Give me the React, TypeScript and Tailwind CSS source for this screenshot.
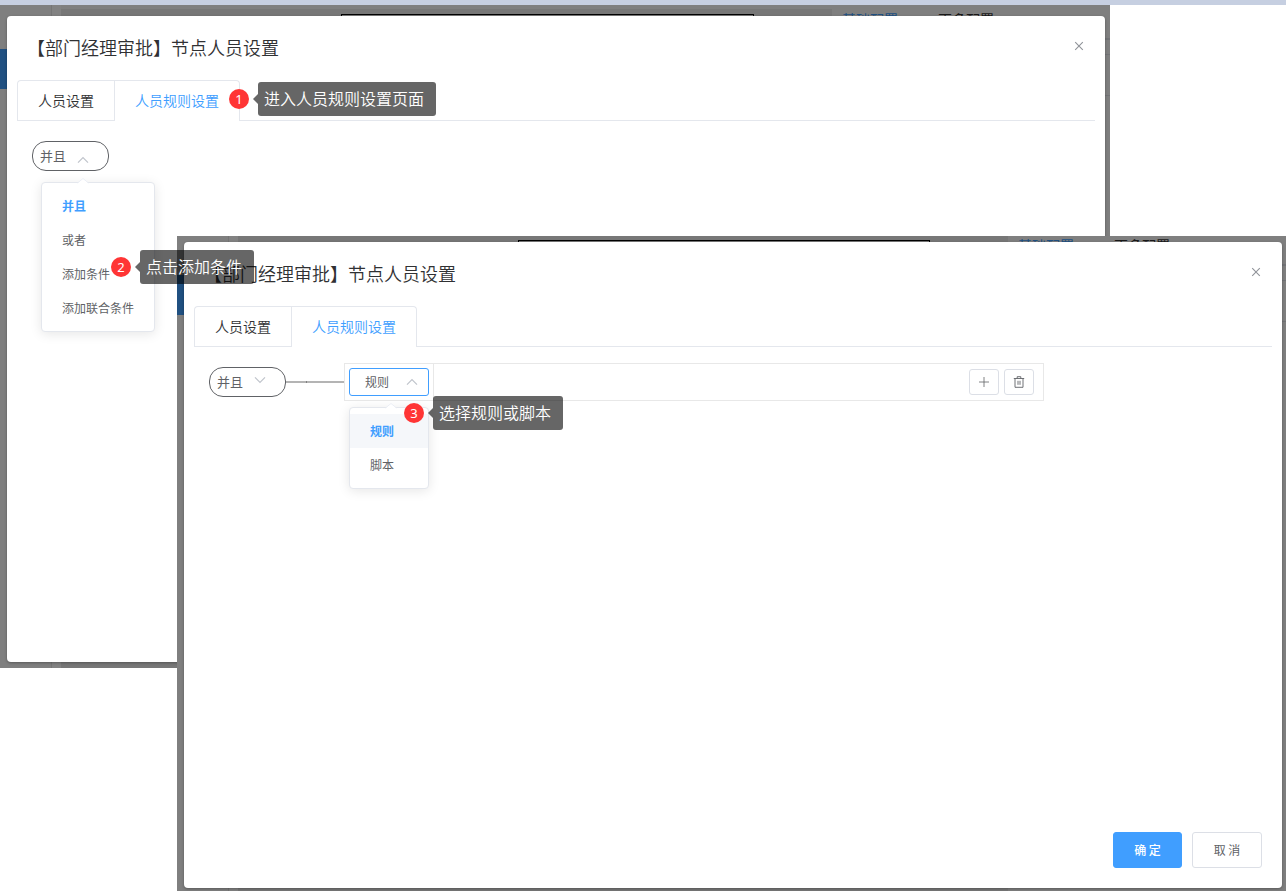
import type { ReactNode } from 'react';

const FONT = "font-['Noto_Sans_CJK_SC',sans-serif]";

function Chevron({ up = false, className = '' }: { up?: boolean; className?: string }) {
  return (
    <svg
      viewBox="0 0 12 12"
      className={`pointer-events-none size-3 fill-none stroke-[#c0c4cc] ${className}`}
      aria-hidden="true"
    >
      <path d={up ? 'M1 8.7 6 3.5l5 5.2' : 'M1 3.3 6 8.5l5-5.2'} strokeWidth="1.2" />
    </svg>
  );
}

function TrashIcon() {
  return (
    <svg viewBox="0 0 12 12" className="size-3 fill-none stroke-[#606266]" aria-hidden="true">
      <path d="M.8 2.5h10.4M2 2.5v8.8h8V2.5M4.2 2.3V.7h3.6v1.6M5 4.8v4M7 4.8v4" strokeWidth="0.9" />
    </svg>
  );
}

function PlusIcon() {
  return (
    <svg viewBox="0 0 12 12" className="size-3 fill-none stroke-[#606266]" aria-hidden="true">
      <path d="M6 1v10M1 6h10" strokeWidth="0.8" />
    </svg>
  );
}

function Backdrop() {
  return (
    <div className="absolute inset-x-0 bottom-0 top-(--page-top) bg-[#7f7f7f]" aria-hidden="true">
      <div className="absolute left-0 top-11 h-10 w-2 bg-[#205081]" />
      <div className="absolute inset-y-0 left-[51px] w-[10px] border-l border-[#757575] bg-[#828282]" />
      <div className="absolute bottom-0 left-[61px] right-[278px] top-1 bg-[#777777]" />
      <div className="absolute left-[341px] right-[356px] top-[9px] h-20 border border-black" />
      <div className="absolute right-[116px] top-1 flex gap-10 text-sm leading-5">
        <span className="text-[#205081]">基础配置</span>
        <span className="text-[#181818]">更多配置</span>
      </div>
      <div className="absolute right-0 top-[33px] h-0.5 w-6 bg-[#727376]" />
      <div className="absolute right-0 top-[49px] h-[42px] w-6 border-y border-[#727376]" />
    </div>
  );
}

function PillSelect({ open = false }: { open?: boolean }) {
  return (
    <div className="relative">
      <select
        aria-label="条件关系"
        className="block h-[30px] w-[77px] appearance-none rounded-[14px] border border-[#606266] bg-white pl-[7px] text-[13px] text-[#606266] outline-none"
      >
        <option>并且</option>
        <option>或者</option>
      </select>
      <Chevron up={open} className={open ? 'absolute left-[45px] top-[13px]' : 'absolute left-[45px] top-[7px]'} />
      {open && (
        <Menu items={['并且', '或者', '添加条件', '添加联合条件']} active="并且" className="left-[9px] top-[41px]" />
      )}
    </div>
  );
}

function Menu({
  items,
  active,
  highlight = false,
  className,
}: {
  items: string[];
  active: string;
  highlight?: boolean;
  className: string;
}) {
  return (
    <div
      className={`absolute z-10 rounded border border-[#e4e7ed] bg-white py-1.5 shadow-[0_2px_12px_rgba(0,0,0,0.1)] ${className}`}
    >
      <svg viewBox="0 0 12 6" className="absolute -top-[5px] left-[35px] h-1.5 w-3" aria-hidden="true">
        <path d="M0 6 6 0l6 6z" fill="#fff" />
        <path d="M.5 5 6 .5 11.5 5" fill="none" stroke="#ebeef5" strokeWidth="1" />
      </svg>
      <ul role="listbox">
        {items.map((item) => (
          <li
            key={item}
            role="option"
            aria-selected={item === active}
            className={`h-[34px] cursor-pointer whitespace-nowrap px-5 text-xs leading-[34px] ${
              item === active ? 'font-bold text-[#409eff]' : 'text-[#606266]'
            } ${highlight && item === active ? 'bg-[#f5f7fa]' : ''}`}
          >
            {item}
          </li>
        ))}
      </ul>
    </div>
  );
}

function Dialog({ children, footer }: { children: ReactNode; footer?: ReactNode }) {
  return (
    <section className="relative flex flex-1 flex-col rounded-sm bg-white shadow-[0_1px_3px_rgba(0,0,0,0.3)]">
      <header className="flex h-[54px] items-start justify-between px-5 pt-[19px]">
        <h2 className="text-lg font-[350] leading-6 text-[#303133]">【部门经理审批】节点人员设置</h2>
        <button type="button" aria-label="关闭" className="flex h-[22px] w-3 items-center justify-center">
          <svg viewBox="0 0 10 10" className="size-2.5 stroke-[#909399]" aria-hidden="true">
            <path d="m1.2 1.2 7.6 7.6M8.8 1.2 1.2 8.8" strokeWidth="1.1" />
          </svg>
        </button>
      </header>
      <div className="flex flex-1 flex-col px-2.5 pt-2.5">
        <div role="tablist" className="flex border-b border-[#e4e7ed] text-sm font-[350]">
          <button
            type="button"
            role="tab"
            aria-selected="false"
            className="h-10 rounded-tl border-l border-t border-[#e4e7ed] px-5 pb-0.5 text-[#303133]"
          >
            人员设置
          </button>
          <button
            type="button"
            role="tab"
            aria-selected="true"
            className="-mb-px h-[41px] rounded-tr border-x border-t border-[#e4e7ed] bg-white px-5 pb-[3px] text-[#409eff]"
          >
            人员规则设置
          </button>
        </div>
        <div role="tabpanel" className="flex-1 px-[15px] pt-4">
          {children}
        </div>
      </div>
      {footer}
    </section>
  );
}

function Callout({ step, text, className }: { step: number; text: string; className: string }) {
  return (
    <div className={`absolute z-30 flex items-center ${className}`}>
      <span className="flex size-5 items-center justify-center rounded-full bg-[#ff3535] font-['Noto_Sans'] text-[13px] leading-5 text-white">
        {step}
      </span>
      <svg viewBox="0 0 5 10" className="ml-1 h-2.5 w-[5px] fill-black/60" aria-hidden="true">
        <path d="M5 0v10L0 5z" />
      </svg>
      <span className="h-[34px] whitespace-nowrap rounded-[3px] bg-black/60 pl-1.5 pr-3 text-base font-[350] leading-8 text-white">
        {text}
      </span>
    </div>
  );
}

function RuleRow() {
  return (
    <div className="flex h-[38px] items-center">
      <PillSelect />
      <div className="flex h-0.5 w-[58px] bg-[#b4b4b4]">
        <span className="ml-5 w-px bg-[#808080]" />
      </div>
      <div className="flex h-[38px] max-w-[700px] flex-1 border border-[#e8e8e8]">
        <div className="flex items-center border-r border-[#e8e8e8] px-1">
          <div className="relative">
            <select
              aria-label="条件类型"
              className="block h-7 w-20 appearance-none rounded-[3px] border border-[#409eff] bg-white pl-[15px] text-xs text-[#606266] outline-none"
            >
              <option>规则</option>
              <option>脚本</option>
            </select>
            <Chevron up className="absolute left-[57px] top-2" />
            <Menu items={['规则', '脚本']} active="规则" highlight className="left-0 top-[39px] w-20" />
          </div>
        </div>
        <div className="flex flex-1 items-center justify-end gap-[5px] pr-[9px]">
          <button
            type="button"
            aria-label="添加"
            className="flex h-[26px] w-[30px] items-center justify-center rounded-[3px] border border-[#dcdfe6]"
          >
            <PlusIcon />
          </button>
          <button
            type="button"
            aria-label="删除"
            className="flex h-[26px] w-[30px] items-center justify-center rounded-[3px] border border-[#dcdfe6]"
          >
            <TrashIcon />
          </button>
        </div>
      </div>
    </div>
  );
}

export default function App() {
  return (
    <main className={`flex min-h-screen flex-col bg-white ${FONT}`}>
      <div className="h-[5px] bg-[#c6cfe1]" />
      <div className="relative grid flex-1 grid-cols-1">
        <div className="relative col-start-1 row-start-1 mb-[223px] mr-[176px] flex overflow-hidden pb-1.5 pl-[7px] pr-[5px] pt-[11px] [--page-top:0px]">
          <Backdrop />
          <Dialog>
            <div />
          </Dialog>
        </div>
        <div className="relative col-start-1 row-start-1 ml-[177px] mt-[231px] flex overflow-hidden pb-[3px] pl-[7px] pr-1 pt-1.5 [--page-top:-5px]">
          <Backdrop />
          <Dialog
            footer={
              <footer className="flex justify-end gap-2.5 p-5">
                <button
                  type="button"
                  className="h-9 min-w-[69px] rounded-[3px] border border-[#409eff] bg-[#409eff] text-xs font-medium text-white"
                >
                  确 定
                </button>
                <button
                  type="button"
                  className="h-9 min-w-[70px] rounded-[3px] border border-[#dcdfe6] bg-white text-xs text-[#606266]"
                >
                  取 消
                </button>
              </footer>
            }
          >
            <RuleRow />
          </Dialog>
        </div>
        <div className="absolute left-8 top-[136px] z-10">
          <PillSelect open />
        </div>
        <Callout step={1} text="进入人员规则设置页面" className="left-[229px] top-[77px]" />
        <Callout step={2} text="点击添加条件" className="left-[111px] top-[245px]" />
        <Callout step={3} text="选择规则或脚本" className="left-[404px] top-[391px]" />
      </div>
    </main>
  );
}
